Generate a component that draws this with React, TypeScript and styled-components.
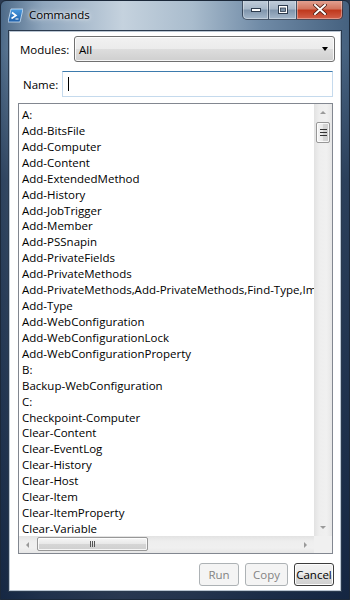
import React from "react";
import styled, { createGlobalStyle } from "styled-components";

const GlobalStyle = createGlobalStyle`
  html, body { margin: 0; padding: 0; background: #2b3b52; }
  body { font-family: "Open Sans", "Noto Sans", sans-serif; }
`;

const commands = [
  "A:",
  "Add-BitsFile",
  "Add-Computer",
  "Add-Content",
  "Add-ExtendedMethod",
  "Add-History",
  "Add-JobTrigger",
  "Add-Member",
  "Add-PSSnapin",
  "Add-PrivateFields",
  "Add-PrivateMethods",
  "Add-PrivateMethods,Add-PrivateMethods,Find-Type,Import-Module",
  "Add-Type",
  "Add-WebConfiguration",
  "Add-WebConfigurationLock",
  "Add-WebConfigurationProperty",
  "B:",
  "Backup-WebConfiguration",
  "C:",
  "Checkpoint-Computer",
  "Clear-Content",
  "Clear-EventLog",
  "Clear-History",
  "Clear-Host",
  "Clear-Item",
  "Clear-ItemProperty",
  "Clear-Variable",
  "Clear-WebConfiguration",
];

const Window = styled.div`
  width: 350px;
  height: 600px;
  box-sizing: border-box;
  display: flex;
  flex-direction: column;
  background:
    linear-gradient(180deg, rgba(20,35,60,0) 0%, rgba(20,35,60,0) 8%, rgba(20,35,60,0.55) 30%, rgba(12,28,55,0.85) 100%),
    linear-gradient(90deg, #4d6a88 0%, #8fa6bd 12%, #c5d2de 35%, #a9bccd 55%, #6f8aa6 75%, #45617f 100%);
  border: 1px solid #1b2839;
  border-radius: 6px 6px 0 0;
  overflow: hidden;
`;

const TitleBar = styled.div`
  height: 29px;
  display: flex;
  align-items: flex-start;
  flex-shrink: 0;
`;

const TitleIcon = styled.div`
  margin: 7px 0 0 7px;
  width: 15px;
  height: 15px;
  display: flex;
`;

const TitleText = styled.div`
  margin: 6px 0 0 6px;
  font-family: "Open Sans", "Noto Sans", sans-serif;
  font-size: 11.5px;
  color: #000;
  text-shadow: 0 0 6px rgba(255,255,255,0.9), 0 0 3px rgba(255,255,255,0.9);
  letter-spacing: -0.1px;
`;

const Spacer = styled.div`
  flex: 1;
`;

const CaptionGroup = styled.div`
  display: flex;
  margin-right: 6px;
  margin-top: -1px;
`;

const CaptionBtn = styled.div<{ $kind: "min" | "max" | "close" }>`
  height: 20px;
  width: ${(p) => (p.$kind === "close" ? "46px" : p.$kind === "max" ? "28px" : "27px")};
  box-sizing: border-box;
  display: flex;
  align-items: center;
  justify-content: center;
  border: 1px solid rgba(30, 45, 65, 0.75);
  border-top: none;
  border-left: ${(p) => (p.$kind === "min" ? "1px solid rgba(30,45,65,0.75)" : "none")};
  border-radius: ${(p) =>
    p.$kind === "min" ? "0 0 0 5px" : p.$kind === "close" ? "0 0 5px 0" : "0"};
  box-shadow: inset 0 0 0 1px rgba(255,255,255,0.35);
  background: ${(p) =>
    p.$kind === "close"
      ? "linear-gradient(180deg, #e4a596 0%, #d27660 45%, #c0391e 55%, #d2604a 100%)"
      : "linear-gradient(180deg, #c3cfdc 0%, #a8b8c9 45%, #8196ad 55%, #a4b7ca 100%)"};
`;

const Client = styled.div`
  flex: 1;
  margin: 0 7px 7px 7px;
  background: #fff;
  border: 1px solid #2a3a4e;
  box-shadow: inset 0 0 0 1px #b9c5d2;
  display: flex;
  flex-direction: column;
  padding: 5px 8px 5px 9px;
  box-sizing: border-box;
  font-family: "Open Sans", "Noto Sans", sans-serif;
  font-size: 11.5px;
  color: #000;
`;

const FieldRow = styled.div<{ $labelPad: number; $mt: number }>`
  display: flex;
  align-items: center;
  margin-top: ${(p) => p.$mt}px;
  padding-left: ${(p) => p.$labelPad}px;
`;

const Label = styled.div<{ $w: number }>`
  width: ${(p) => p.$w}px;
  flex-shrink: 0;
`;

const Combo = styled.div`
  flex: 1;
  height: 26px;
  box-sizing: border-box;
  border: 1px solid #707070;
  border-radius: 3px;
  background: linear-gradient(180deg, #f2f2f2 0%, #ebebeb 50%, #dddddd 51%, #cfcfcf 100%);
  box-shadow: inset 0 0 0 1px rgba(255,255,255,0.8);
  display: flex;
  align-items: center;
  padding: 0 6px 0 4px;
  margin-right: -2px;
`;

const ComboText = styled.div`
  flex: 1;
`;

const ComboArrow = styled.div`
  width: 0;
  height: 0;
  border-left: 3.5px solid transparent;
  border-right: 3.5px solid transparent;
  border-top: 4px solid #000;
`;

const TextBox = styled.div`
  flex: 1;
  height: 26px;
  box-sizing: border-box;
  border: 1px solid #c5daed;
  border-top-color: #3d7bad;
  display: flex;
  align-items: center;
  padding-left: 5px;
`;

const Caret = styled.div`
  width: 1px;
  height: 14px;
  background: #000;
`;

const ListBox = styled.div`
  margin-top: 6px;
  height: 451px;
  box-sizing: border-box;
  border: 1px solid #828790;
  display: grid;
  grid-template-columns: 1fr 18px;
  grid-template-rows: 1fr 17px;
  overflow: hidden;
`;

const Items = styled.div`
  overflow: hidden;
  padding: 3px 0 0 3px;
`;

const Item = styled.div`
  height: 15.93px;
  line-height: 15.93px;
  white-space: nowrap;
`;

const VScroll = styled.div`
  background: linear-gradient(90deg, #e2e2e2 0%, #eeeeee 30%, #f0f0f0 70%, #e6e6e6 100%);
  position: relative;
  display: flex;
  flex-direction: column;
  align-items: center;
`;

const HScroll = styled.div`
  background: linear-gradient(180deg, #e2e2e2 0%, #eeeeee 30%, #f0f0f0 70%, #e6e6e6 100%);
  position: relative;
  display: flex;
  align-items: center;
`;

const Corner = styled.div`
  background: #f0f0f0;
`;

const Arrow = styled.div<{ $dir: "up" | "down" | "left" | "right" }>`
  width: 0;
  height: 0;
  ${(p) =>
    p.$dir === "up"
      ? "border-left:3px solid transparent;border-right:3px solid transparent;border-bottom:3px solid #9a9a9a;"
      : p.$dir === "down"
      ? "border-left:3px solid transparent;border-right:3px solid transparent;border-top:3px solid #9a9a9a;"
      : p.$dir === "left"
      ? "border-top:3px solid transparent;border-bottom:3px solid transparent;border-right:3px solid #9a9a9a;"
      : "border-top:3px solid transparent;border-bottom:3px solid transparent;border-left:3px solid #9a9a9a;"}
`;

const VThumb = styled.div`
  position: absolute;
  left: 2px;
  top: 18px;
  width: 14px;
  height: 21px;
  box-sizing: border-box;
  border: 1px solid #979797;
  border-radius: 2px;
  background: linear-gradient(90deg, #f6f6f6 0%, #e8e8e8 50%, #d6d6d6 51%, #cfcfcf 100%);
  box-shadow: inset 0 0 0 1px rgba(255,255,255,0.8);
  display: flex;
  flex-direction: column;
  align-items: center;
  justify-content: center;
  gap: 2px;
`;

const HThumb = styled.div`
  position: absolute;
  left: 18px;
  top: 1px;
  width: 111px;
  height: 14px;
  box-sizing: border-box;
  border: 1px solid #979797;
  border-radius: 2px;
  background: linear-gradient(180deg, #f6f6f6 0%, #e8e8e8 50%, #d6d6d6 51%, #cfcfcf 100%);
  box-shadow: inset 0 0 0 1px rgba(255,255,255,0.8);
  display: flex;
  align-items: center;
  justify-content: center;
  gap: 1px;
`;

const GripH = styled.div`
  width: 7px;
  height: 1px;
  background: #333;
`;

const GripV = styled.div`
  width: 1px;
  height: 6px;
  background: #555;
`;

const ArrowSlot = styled.div<{ $v: boolean }>`
  width: ${(p) => (p.$v ? "18px" : "17px")};
  height: 17px;
  display: flex;
  align-items: center;
  justify-content: center;
`;

const Buttons = styled.div`
  display: flex;
  justify-content: flex-end;
  gap: 6px;
  margin-top: 9px;
  margin-right: -1px;
`;

const Button = styled.div<{ $enabled?: boolean; $w: number }>`
  width: ${(p) => p.$w}px;
  height: 23px;
  box-sizing: border-box;
  border: 1px solid ${(p) => (p.$enabled ? "#3c3c3c" : "#adb2b5")};
  border-radius: 3px;
  display: flex;
  align-items: center;
  justify-content: center;
  color: ${(p) => (p.$enabled ? "#000" : "#838383")};
  background: ${(p) =>
    p.$enabled
      ? "linear-gradient(180deg, #f2f2f2 0%, #ebebeb 50%, #dddddd 51%, #cfcfcf 100%)"
      : "#f4f4f4"};
  box-shadow: ${(p) => (p.$enabled ? "inset 0 0 0 1px #fcfcfc" : "none")};
`;

const PsIcon = () => (
  <svg width="15" height="15" viewBox="0 0 15 15">
    <defs>
      <linearGradient id="psg" x1="0" y1="0" x2="0" y2="1">
        <stop offset="0" stopColor="#4a9be0" />
        <stop offset="1" stopColor="#1f5fa8" />
      </linearGradient>
    </defs>
    <path d="M3 1 H15 L12 14 H0 Z" fill="url(#psg)" stroke="#cfe3f6" strokeWidth="0.8" />
    <path d="M4 4.5 L8 7.5 L3.5 10.5" fill="none" stroke="#fff" strokeWidth="1.6" />
    <path d="M7.5 11 H10.5" stroke="#fff" strokeWidth="1.2" />
  </svg>
);

const MinGlyph = () => (
  <svg width="12" height="6" viewBox="0 0 12 6">
    <rect x="1.5" y="1.5" width="9" height="3" fill="#fff" stroke="#2d3b4d" strokeWidth="1" />
  </svg>
);

const MaxGlyph = () => (
  <svg width="12" height="10" viewBox="0 0 12 10">
    <rect x="1.5" y="0.5" width="9" height="8" fill="#fff" stroke="#2d3b4d" strokeWidth="1" />
    <rect x="3.5" y="3" width="5" height="3.5" fill="#7f93a8" stroke="#2d3b4d" strokeWidth="0.8" />
  </svg>
);

const CloseGlyph = () => (
  <svg width="14" height="11" viewBox="0 0 14 11">
    <path d="M2 1 L12 10 M12 1 L2 10" stroke="#4a1a10" strokeWidth="3.6" strokeLinecap="square" />
    <path d="M2 1 L12 10 M12 1 L2 10" stroke="#fff" strokeWidth="2" strokeLinecap="square" />
  </svg>
);

export default function App() {
  return (
    <>
      <GlobalStyle />
      <Window>
        <TitleBar>
          <TitleIcon>
            <PsIcon />
          </TitleIcon>
          <TitleText>Commands</TitleText>
          <Spacer />
          <CaptionGroup>
            <CaptionBtn $kind="min">
              <MinGlyph />
            </CaptionBtn>
            <CaptionBtn $kind="max">
              <MaxGlyph />
            </CaptionBtn>
            <CaptionBtn $kind="close">
              <CloseGlyph />
            </CaptionBtn>
          </CaptionGroup>
        </TitleBar>
        <Client>
          <FieldRow $labelPad={2} $mt={0}>
            <Label $w={54}>Modules:</Label>
            <Combo>
              <ComboText>All</ComboText>
              <ComboArrow />
            </Combo>
          </FieldRow>
          <FieldRow $labelPad={5} $mt={9}>
            <Label $w={39}>Name:</Label>
            <TextBox>
              <Caret />
            </TextBox>
          </FieldRow>
          <ListBox>
            <Items>
              {commands.map((c) => (
                <Item key={c}>{c}</Item>
              ))}
            </Items>
            <VScroll>
              <ArrowSlot $v>
                <Arrow $dir="up" />
              </ArrowSlot>
              <VThumb>
                <GripH />
                <GripH />
                <GripH />
              </VThumb>
              <Spacer />
              <ArrowSlot $v>
                <Arrow $dir="down" />
              </ArrowSlot>
            </VScroll>
            <HScroll>
              <ArrowSlot $v={false}>
                <Arrow $dir="left" />
              </ArrowSlot>
              <HThumb>
                <GripV />
                <GripV />
                <GripV />
              </HThumb>
              <Spacer />
              <ArrowSlot $v={false}>
                <Arrow $dir="right" />
              </ArrowSlot>
            </HScroll>
            <Corner />
          </ListBox>
          <Buttons>
            <Button $w={40}>Run</Button>
            <Button $w={43}>Copy</Button>
            <Button $w={40} $enabled>
              Cancel
            </Button>
          </Buttons>
        </Client>
      </Window>
    </>
  );
}
